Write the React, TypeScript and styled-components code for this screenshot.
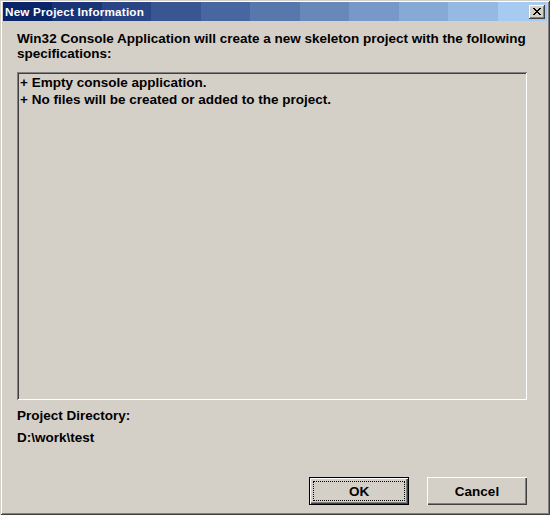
import React from "react";
import styled, { createGlobalStyle } from "styled-components";

const GlobalStyle = createGlobalStyle`
  html, body { margin: 0; padding: 0; background: #d4d0c8; }
  body { font-family: "Liberation Sans", Arial, sans-serif; }
`;

const bandColors = (() => {
  const from = [10, 36, 106];
  const to = [166, 202, 240];
  const n = 11;
  const stops: string[] = [];
  for (let i = 0; i < n; i++) {
    const t = i / (n - 1);
    const c = from.map((f, k) => Math.round(f + (to[k] - f) * t));
    const a = ((i / n) * 100).toFixed(3);
    const b = (((i + 1) / n) * 100).toFixed(3);
    stops.push(`rgb(${c.join(",")}) ${a}%`, `rgb(${c.join(",")}) ${b}%`);
  }
  return `linear-gradient(to right, ${stops.join(", ")})`;
})();

const Window = styled.div`
  width: 550px;
  height: 515px;
  box-sizing: border-box;
  padding: 2px 3px 3px 3px;
  background: #d4d0c8;
  display: flex;
  flex-direction: column;
  box-shadow: inset 1px 1px #d4d0c8, inset -1px -1px #404040,
    inset 2px 2px #ffffff, inset -2px -2px #808080;
  font-weight: bold;
  color: #000;
`;

const TitleBar = styled.div`
  height: 19px;
  display: flex;
  align-items: center;
  justify-content: space-between;
  padding: 0 2px 0 2px;
  background: ${bandColors};
`;

const Title = styled.span`
  color: #fff;
  font-size: 11.7px;
  font-weight: bold;
  letter-spacing: 0.2px;
`;

const CloseButton = styled.div`
  width: 16px;
  height: 14px;
  box-sizing: border-box;
  background: #d4d0c8;
  display: flex;
  align-items: center;
  justify-content: center;
  box-shadow: inset -1px -1px #404040, inset 1px 1px #ffffff,
    inset -2px -2px #808080, inset 2px 2px #d4d0c8;
`;

const Body = styled.div`
  flex: 1;
  display: flex;
  flex-direction: column;
  padding: 10px 20px 0 14px;
  font-size: 13.5px;
`;

const Description = styled.p`
  margin: 0;
  line-height: 15px;
`;

const ListBox = styled.div`
  margin-top: 11px;
  height: 328px;
  box-sizing: border-box;
  padding: 2px 3px;
  background: #d4d0c8;
  box-shadow: inset 1px 1px #808080, inset -1px -1px #ffffff,
    inset 2px 2px #404040, inset -2px -2px #d4d0c8;
`;

const ListLine = styled.div`
  line-height: 17px;
`;

const Label = styled.div<{ $gap: number }>`
  margin-top: ${(p) => p.$gap}px;
  line-height: 15px;
`;

const ButtonRow = styled.div`
  margin-top: auto;
  margin-bottom: 7px;
  display: flex;
  justify-content: flex-end;
  gap: 18px;
`;

const Button = styled.button<{ $default?: boolean }>`
  width: 100px;
  height: 28px;
  box-sizing: border-box;
  border: none;
  padding: 0;
  position: relative;
  font-family: "Liberation Sans", Arial, sans-serif;
  font-weight: bold;
  font-size: 13.5px;
  color: #000;
  background: #d4d0c8;
  box-shadow: ${(p) =>
    p.$default
      ? "inset 1px 1px #000, inset -1px -1px #000, inset 2px 2px #fff, inset -2px -2px #404040, inset -3px -3px #808080"
      : "inset 1px 1px #fff, inset -1px -1px #404040, inset -2px -2px #808080"};
`;

const FocusRing = styled.span`
  position: absolute;
  inset: 4px;
  border: 1px dotted #000;
`;

const ButtonLabel = styled.span`
  position: relative;
`;

export default function App() {
  return (
    <>
      <GlobalStyle />
      <Window>
        <TitleBar>
          <Title>New Project Information</Title>
          <CloseButton>
            <svg width="8" height="7" viewBox="0 0 8 7">
              <path
                d="M0 0h2v1h1v1h2V1h1V0h2v1H7v1H6v1H5v1h1v1h1v1h1v1H6V6H5V5H3v1H2v1H0V6h1V5h1V4h1V3H2V2H1V1H0z"
                fill="#000"
              />
            </svg>
          </CloseButton>
        </TitleBar>
        <Body>
          <Description>
            Win32 Console Application will create a new skeleton project with the following
            specifications:
          </Description>
          <ListBox>
            <ListLine>+ Empty console application.</ListLine>
            <ListLine>+ No files will be created or added to the project.</ListLine>
          </ListBox>
          <Label $gap={8}>Project Directory:</Label>
          <Label $gap={7}>D:\work\test</Label>
          <ButtonRow>
            <Button $default>
              <FocusRing />
              <ButtonLabel>OK</ButtonLabel>
            </Button>
            <Button>
              <ButtonLabel>Cancel</ButtonLabel>
            </Button>
          </ButtonRow>
        </Body>
      </Window>
    </>
  );
}
